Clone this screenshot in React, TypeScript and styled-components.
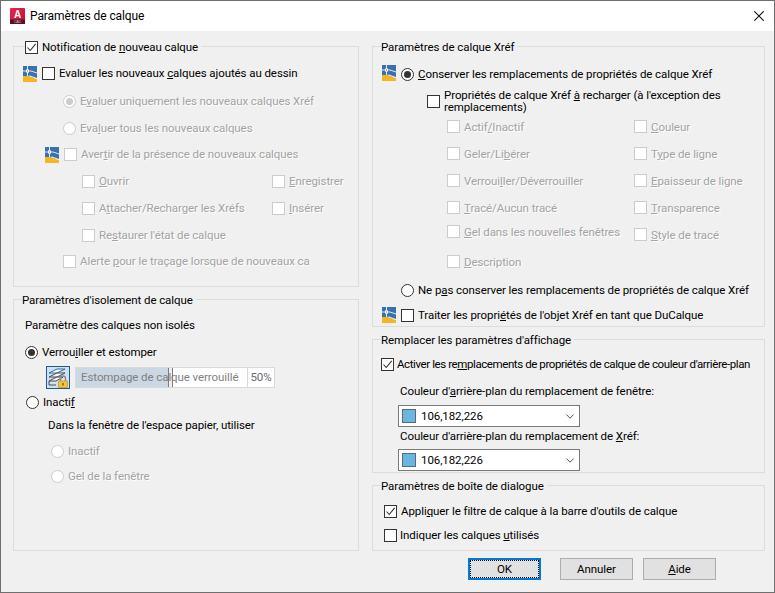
import React from "react";
import styled, { createGlobalStyle } from "styled-components";

const GlobalStyle = createGlobalStyle`
  html, body {
    margin: 0;
    padding: 0;
    overflow: hidden;
    background: #f0f0f0;
  }
`;

const Dialog = styled.div`
  box-sizing: border-box;
  width: 775px;
  height: 593px;
  display: flex;
  flex-direction: column;
  background: #f0f0f0;
  border: 1px solid #6f6f6f;
  font-family: Roboto, "Open Sans", sans-serif;
  font-size: 11.5px;
  letter-spacing: -0.08px;
  color: #000;
`;

const TitleBar = styled.div`
  box-sizing: border-box;
  height: 30px;
  flex: none;
  display: flex;
  align-items: center;
  background: #fff;
  padding: 0 10px 1px 8px;
  gap: 4px;
`;

const TitleText = styled.div`
  flex: 1;
  font-size: 12px;
  letter-spacing: -0.1px;
`;

const Body = styled.div`
  flex: none;
  display: grid;
  grid-template-columns: 346px 393px;
  column-gap: 13px;
  padding: 8px 0 0 12px;
`;

const Column = styled.div`
  display: flex;
  flex-direction: column;
  gap: 5px;
`;

const Group = styled.fieldset<{ $h: number; $top: number }>`
  box-sizing: border-box;
  min-width: 0;
  height: ${(p) => p.$h}px;
  margin: 0;
  padding: ${(p) => p.$top}px 0 0 0;
  border: 1px solid #dcdcdc;
  overflow: hidden;
`;

const Legend = styled.legend<{ $x?: number }>`
  box-sizing: border-box;
  display: flex;
  align-items: center;
  gap: 4px;
  height: 14px;
  margin-left: ${(p) => p.$x ?? 8}px;
  padding: 2px 3px 0 0;
  white-space: nowrap;
`;

const Row = styled.div<{ $h?: number; $pl: number; $pt?: number }>`
  box-sizing: border-box;
  display: flex;
  align-items: center;
  height: ${(p) => p.$h ?? 27}px;
  padding-left: ${(p) => p.$pl}px;
  padding-top: ${(p) => p.$pt ?? 0}px;
  white-space: nowrap;
`;

const Cell = styled.div<{ $w: number; $up?: number }>`
  display: flex;
  align-items: center;
  flex: none;
  width: ${(p) => p.$w}px;
  margin-bottom: ${(p) => (p.$up ?? 0) * 2}px;
`;

const OptionWrap = styled.div<{ $gap: number }>`
  display: flex;
  align-items: center;
  gap: ${(p) => p.$gap}px;
`;

const OptionText = styled.span<{ $off?: boolean; $wrap?: boolean }>`
  color: ${(p) => (p.$off ? "#a3a3a3" : "#000")};
  text-shadow: ${(p) => (p.$off ? "1px 1px 0 #fff" : "none")};
  white-space: ${(p) => (p.$wrap ? "normal" : "nowrap")};
  line-height: ${(p) => (p.$wrap ? "12px" : "14px")};
`;

const TightText = styled.span`
  letter-spacing: -0.41px;
`;

const Mn = styled.span`
  text-decoration: underline;
`;

const CheckBox = styled.span<{ $off?: boolean }>`
  box-sizing: border-box;
  flex: none;
  display: flex;
  align-items: center;
  justify-content: center;
  width: 13px;
  height: 13px;
  background: #fff;
  border: 1px solid ${(p) => (p.$off ? "#cccccc" : "#333333")};
`;

const RadioBox = styled.span<{ $off?: boolean }>`
  box-sizing: border-box;
  flex: none;
  display: flex;
  align-items: center;
  justify-content: center;
  width: 13px;
  height: 13px;
  border-radius: 50%;
  background: #fff;
  border: 1px solid ${(p) => (p.$off ? "#cccccc" : "#333333")};
`;

const RadioDot = styled.span<{ $off?: boolean }>`
  width: 7px;
  height: 7px;
  border-radius: 50%;
  background: ${(p) => (p.$off ? "#cccccc" : "#333333")};
`;

const Slider = styled.div`
  display: flex;
  height: 21px;
  margin-left: 5px;
`;

const SliderTrack = styled.div`
  box-sizing: border-box;
  position: relative;
  width: 173px;
  display: flex;
  align-items: center;
  padding-left: 5px;
  background: #fff;
  border: 1px solid #d9d9d9;
  color: #7f7f7f;
`;

const SliderFill = styled.div`
  position: absolute;
  left: 0;
  top: 0;
  bottom: 0;
  width: 96px;
  background: #ccd7e4;
`;

const SliderThumb = styled.div`
  position: absolute;
  left: 92px;
  top: 0;
  bottom: 0;
  width: 3px;
  background: #f0f0f0;
  border: 1px solid #7b7b7b;
  border-width: 0 1px;
`;

const SliderLabel = styled.span`
  position: relative;
`;

const SliderValue = styled.div`
  box-sizing: border-box;
  width: 27px;
  display: flex;
  align-items: center;
  justify-content: center;
  background: #fff;
  border: 1px solid #d9d9d9;
  border-left: none;
  color: #6a6a6a;
`;

const IconButton = styled.div`
  box-sizing: border-box;
  display: flex;
  align-items: center;
  justify-content: center;
  width: 24px;
  height: 23px;
  background: #cde3f3;
  border: 1px solid #24588c;
`;

const Combo = styled.div`
  box-sizing: border-box;
  width: 182px;
  height: 22px;
  display: flex;
  align-items: center;
  gap: 5px;
  padding: 0 5px 0 3px;
  background: #fff;
  border: 1px solid #7a7a7a;
`;

const Swatch = styled.span`
  box-sizing: border-box;
  width: 14px;
  height: 14px;
  background: #6ab6e2;
  border: 1px solid #5a6a78;
`;

const ComboText = styled.span`
  flex: 1;
`;

const Footer = styled.div`
  display: flex;
  justify-content: flex-end;
  gap: 10px;
  padding: 7px 58px 0 0;
`;

const Button = styled.div<{ $def?: boolean }>`
  box-sizing: border-box;
  width: 73px;
  height: 22px;
  display: flex;
  align-items: center;
  justify-content: center;
  margin-right: ${(p) => (p.$def ? "9px" : "0")};
  background: #e1e1e1;
  border: ${(p) => (p.$def ? "2px solid #0078d7" : "1px solid #adadad")};
  outline: ${(p) => (p.$def ? "1px dotted #000" : "none")};
  outline-offset: -3px;
`;

const IconGap = styled.span`
  width: 5px;
  flex: none;
`;

const LayerSvg = styled.svg<{ $dy?: number }>`
  flex: none;
  margin-top: ${(p) => Math.max(p.$dy ?? 0, 0) * 2}px;
  margin-bottom: ${(p) => Math.max(-(p.$dy ?? 0), 0) * 2}px;
`;

const CheckMark = ({ off }: { off?: boolean }) => (
  <svg width="11" height="11" viewBox="0 0 11 11">
    <path d="M1.5 5.5 L4.2 8.5 L9.7 1.8" fill="none" stroke={off ? "#ccc" : "#333"} strokeWidth="1.1" />
  </svg>
);

const LayerIcon = ({ dy }: { dy?: number }) => (
  <LayerSvg $dy={dy} width="14" height="16" viewBox="0 0 14 16">
    <rect x="0" y="0" width="14" height="12" fill="#3a70ac" />
    <path d="M0 10 L5 10 L14 13 L14 16 L0 16 Z" fill="#f5b51e" />
    <path d="M5 10 L14 13 L14 12 L7 9.6 Z" fill="#f0f0f0" />
    <path d="M4.5 0 V10 M0 5 H8 L14 7" fill="none" stroke="#dbe6f2" strokeWidth="1" />
    <rect x="3" y="3.5" width="3" height="3" fill="#fff" />
    <rect x="4" y="4.5" width="1" height="1" fill="#3a70ac" />
  </LayerSvg>
);

const LockLayersIcon = () => (
  <svg width="22" height="21" viewBox="0 0 22 21">
    <path d="M2 6 L10 2 L18 2 L10 6 Z" fill="#f3f8fc" stroke="#2d6aa0" strokeWidth="1" />
    <path d="M2 10 L10 6 L18 6 L10 10 Z" fill="#f3f8fc" stroke="#4a4a4a" strokeWidth="1" />
    <path d="M2 14 L10 10 L16 10 L9 14 Z" fill="#f3f8fc" stroke="#4a4a4a" strokeWidth="1" />
    <path d="M2 18 L9 18 M2 14 L2 18" fill="none" stroke="#4a4a4a" strokeWidth="1" />
    <path d="M13.5 14 V11.5 a2.5 2.5 0 0 1 5 0 V14" fill="none" stroke="#8a8a8a" strokeWidth="1.3" />
    <rect x="11.5" y="14" width="9" height="6.5" rx="0.5" fill="#f4c534" stroke="#b8922a" strokeWidth="0.7" />
    <rect x="15.3" y="16" width="1.4" height="2.5" fill="#7a5f14" />
  </svg>
);

const AppLogo = () => (
  <svg width="17" height="16" viewBox="0 0 17 16">
    <defs>
      <linearGradient id="logoRed" x1="0" y1="0" x2="1" y2="1">
        <stop offset="0" stopColor="#e8244c" />
        <stop offset="1" stopColor="#c20f35" />
      </linearGradient>
    </defs>
    <rect x="1" y="0" width="15" height="16" rx="1" fill="url(#logoRed)" />
    <rect x="1" y="11.5" width="15" height="4.5" fill="#5a1024" />
    <text x="8.5" y="9.5" textAnchor="middle" fontFamily="Liberation Sans, sans-serif" fontWeight="700" fontSize="10" fill="#fff">
      A
    </text>
    <text x="8.5" y="15" textAnchor="middle" fontFamily="Liberation Sans, sans-serif" fontSize="3.5" fill="#e6b9c4">
      CAD
    </text>
  </svg>
);

const CloseIcon = () => (
  <svg width="10" height="10" viewBox="0 0 10 10">
    <path d="M0.3 0.3 L9.7 9.7 M9.7 0.3 L0.3 9.7" stroke="#111" strokeWidth="1.1" />
  </svg>
);

const Chevron = () => (
  <svg width="8" height="5" viewBox="0 0 8 5">
    <path d="M0.4 0.5 L4 4.2 L7.6 0.5" fill="none" stroke="#555" strokeWidth="1" />
  </svg>
);

type OptionProps = {
  kind?: "check" | "radio";
  on?: boolean;
  off?: boolean;
  gap?: number;
  children: React.ReactNode;
};

const Option = ({ kind = "check", on, off, gap = 4, children }: OptionProps) => (
  <OptionWrap $gap={gap}>
    {kind === "check" ? (
      <CheckBox $off={off}>{on && <CheckMark off={off} />}</CheckBox>
    ) : (
      <RadioBox $off={off}>{on && <RadioDot $off={off} />}</RadioBox>
    )}
    <OptionText $off={off}>{children}</OptionText>
  </OptionWrap>
);

const ColourCombo = () => (
  <Combo>
    <Swatch />
    <ComboText>106,182,226</ComboText>
    <Chevron />
  </Combo>
);

export default function App() {
  return (
    <>
      <GlobalStyle />
      <Dialog>
        <TitleBar>
          <AppLogo />
          <TitleText>Paramètres de calque</TitleText>
          <CloseIcon />
        </TitleBar>
        <Body>
          <Column>
            <Group $h={248} $top={7}>
              <Legend $x={11}>
                <Option on>
                  Notification de <Mn>n</Mn>ouveau calque
                </Option>
              </Legend>
              <Row $h={26} $pl={9}>
                <LayerIcon dy={1} />
                <IconGap />
                <Option>
                  Evaluer les nouveaux <Mn>c</Mn>alques ajoutés au dessin
                </Option>
              </Row>
              <Row $h={30} $pl={49}>
                <Option kind="radio" on off>
                  E<Mn>v</Mn>aluer uniquement les nouveaux calques Xréf
                </Option>
              </Row>
              <Row $h={24} $pl={49}>
                <Option kind="radio" off>
                  Eva<Mn>l</Mn>uer tous les nouveaux calques
                </Option>
              </Row>
              <Row $h={28} $pl={31}>
                <LayerIcon dy={1} />
                <IconGap />
                <Option off>
                  Aver<Mn>t</Mn>ir de la présence de nouveaux calques
                </Option>
              </Row>
              <Row $h={26} $pl={68}>
                <Cell $w={190}>
                  <Option off>
                    <Mn>O</Mn>uvrir
                  </Option>
                </Cell>
                <Option off>
                  <Mn>E</Mn>nregistrer
                </Option>
              </Row>
              <Row $h={28} $pl={68}>
                <Cell $w={190}>
                  <Option off>
                    A<Mn>t</Mn>tacher/Recharger les Xréfs
                  </Option>
                </Cell>
                <Option off>
                  <Mn>I</Mn>nsérer
                </Option>
              </Row>
              <Row $h={26} $pl={68}>
                <Option off>
                  Re<Mn>s</Mn>taurer l'état de calque
                </Option>
              </Row>
              <Row $h={26} $pl={49}>
                <Option off>
                  Alerte <Mn>p</Mn>our le traçage lorsque de nouveaux ca
                </Option>
              </Row>
            </Group>
            <Group $h={259} $top={5}>
              <Legend>Paramètres d'isolement de calque</Legend>
              <Row $h={28} $pl={11}>
                <OptionText>Paramètre des calques non isolés</OptionText>
              </Row>
              <Row $h={26} $pl={11}>
                <Option kind="radio" on>
                  Verrou<Mn>i</Mn>ller et estomper
                </Option>
              </Row>
              <Row $h={24} $pl={32}>
                <IconButton>
                  <LockLayersIcon />
                </IconButton>
                <Slider>
                  <SliderTrack>
                    <SliderFill />
                    <SliderThumb />
                    <SliderLabel>Estompage de calque verrouillé</SliderLabel>
                  </SliderTrack>
                  <SliderValue>50%</SliderValue>
                </Slider>
              </Row>
              <Row $h={26} $pl={12}>
                <Option kind="radio">
                  Inacti<Mn>f</Mn>
                </Option>
              </Row>
              <Row $h={20} $pl={34}>
                <OptionText>Dans la fenêtre de l'espace papier, utiliser</OptionText>
              </Row>
              <Row $h={32} $pl={37}>
                <Option kind="radio" off>
                  Inactif
                </Option>
              </Row>
              <Row $h={18} $pl={37}>
                <Option kind="radio" off>
                  Gel de la fenêtre
                </Option>
              </Row>
            </Group>
          </Column>
          <Column>
            <Group $h={288} $top={9}>
              <Legend>Paramètres de calque Xréf</Legend>
              <Row $h={24} $pl={9}>
                <LayerIcon dy={-1} />
                <IconGap />
                <Option kind="radio" on>
                  <Mn>C</Mn>onserver les remplacements de propriétés de calque Xréf
                </Option>
              </Row>
              <Row $h={27} $pt={3} $pl={54}>
                <OptionWrap $gap={4}>
                  <CheckBox />
                  <OptionText $wrap>
                    Propriétés de calque Xréf <Mn>à</Mn> recharger (à l'exception des
                    <br />
                    remplacements)
                  </OptionText>
                </OptionWrap>
              </Row>
              <Row $pl={74}>
                <Cell $w={187}>
                  <Option off>
                    Actif<Mn>/</Mn>Inactif
                  </Option>
                </Cell>
                <Option off>
                  <Mn>C</Mn>ouleur
                </Option>
              </Row>
              <Row $pl={74}>
                <Cell $w={187}>
                  <Option off>
                    Geler/Li<Mn>b</Mn>érer
                  </Option>
                </Cell>
                <Option off>
                  T<Mn>y</Mn>pe de ligne
                </Option>
              </Row>
              <Row $pl={74}>
                <Cell $w={187}>
                  <Option off>
                    Verroui<Mn>l</Mn>ler/Déverrouiller
                  </Option>
                </Cell>
                <Option off>
                  <Mn>E</Mn>paisseur de ligne
                </Option>
              </Row>
              <Row $pl={74}>
                <Cell $w={187}>
                  <Option off>
                    <Mn>T</Mn>racé/Aucun tracé
                  </Option>
                </Cell>
                <Option off>
                  <Mn>T</Mn>ransparence
                </Option>
              </Row>
              <Row $pl={74}>
                <Cell $w={187} $up={3}>
                  <Option off>
                    <Mn>G</Mn>el dans les nouvelles fenêtres
                  </Option>
                </Cell>
                <Option off>
                  <Mn>S</Mn>tyle de tracé
                </Option>
              </Row>
              <Row $pl={74}>
                <Option off>
                  <Mn>D</Mn>escription
                </Option>
              </Row>
              <Row $h={30} $pl={28}>
                <Option kind="radio">
                  Ne p<Mn>a</Mn>s conserver les remplacements de propriétés de calque Xréf
                </Option>
              </Row>
              <Row $h={20} $pl={9}>
                <LayerIcon />
                <IconGap />
                <Option>
                  Traiter les propri<Mn>é</Mn>tés de l'objet Xréf en tant que DuCalque
                </Option>
              </Row>
            </Group>
            <Group $h={141} $top={6}>
              <Legend>Remplacer les paramètres d'affichage</Legend>
              <Row $h={24} $pl={8}>
                <Option on gap={3}>
                  <TightText>
                    Activer les re<Mn>m</Mn>placements de propriétés de calque de couleur d'arrière-plan
                  </TightText>
                </Option>
              </Row>
              <Row $h={29} $pl={27}>
                <OptionText>
                  Couleur d'<Mn>a</Mn>rrière-plan du remplacement de fenêtre:
                </OptionText>
              </Row>
              <Row $h={22} $pl={25}>
                <ColourCombo />
              </Row>
              <Row $h={18} $pl={27}>
                <OptionText>
                  Couleur d'arrière-plan du remplacement de <Mn>X</Mn>réf:
                </OptionText>
              </Row>
              <Row $h={26} $pt={4} $pl={25}>
                <ColourCombo />
              </Row>
            </Group>
            <Group $h={73} $top={7}>
              <Legend>Paramètres de boîte de dialogue</Legend>
              <Row $h={24} $pl={11}>
                <Option on>
                  Appli<Mn>q</Mn>uer le filtre de calque à la barre d'outils de calque
                </Option>
              </Row>
              <Row $h={24} $pl={11}>
                <Option gap={3}>
                  Indiquer les calques <Mn>u</Mn>tilisés
                </Option>
              </Row>
            </Group>
          </Column>
        </Body>
        <Footer>
          <Button $def>OK</Button>
          <Button>Annuler</Button>
          <Button>
            <span>
              <Mn>A</Mn>ide
            </span>
          </Button>
        </Footer>
      </Dialog>
    </>
  );
}
